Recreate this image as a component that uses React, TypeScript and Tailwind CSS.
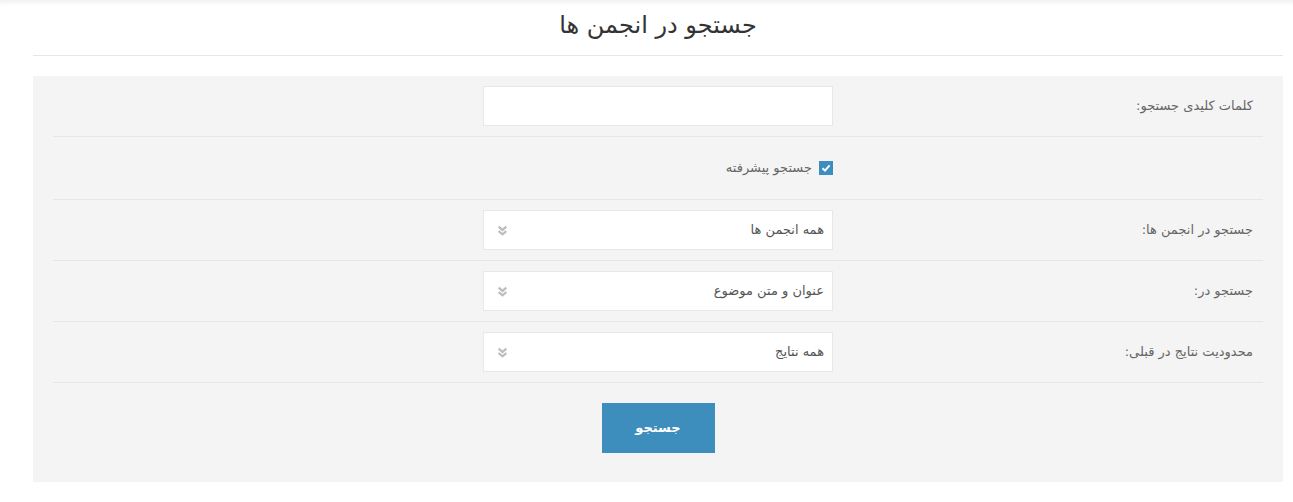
import { useState } from 'react';

const font = { fontFamily: '"DejaVu Sans", Tahoma, sans-serif' };

function Chevrons() {
  return (
    <svg width="11" height="11" viewBox="0 0 10 10" className="text-[#bdbdbd]">
      <path d="M1.5 1.5 L5 4.5 L8.5 1.5" fill="none" stroke="currentColor" strokeWidth="2" />
      <path d="M1.5 5.5 L5 8.5 L8.5 5.5" fill="none" stroke="currentColor" strokeWidth="2" />
    </svg>
  );
}

function Row({ label, children }: { label?: string; children: React.ReactNode }) {
  return (
    <div className="grid grid-cols-[1fr_350px_1fr] items-center border-b border-[#e6e6e6] py-[10px]">
      <div className="pr-[10px] text-[13px] text-[#666]">{label}</div>
      <div>{children}</div>
      <div />
    </div>
  );
}

function Select({ value }: { value: string }) {
  return (
    <div className="flex h-10 items-center justify-between border border-[#e8e8e8] bg-white pl-[13px] pr-[8px] text-[13px] text-[#555]">
      <span>{value}</span>
      <Chevrons />
    </div>
  );
}

export default function App() {
  const [advanced, setAdvanced] = useState(true);

  return (
    <div dir="rtl" style={font} className="min-h-[502px] bg-white shadow-[inset_0_5px_5px_-3px_rgba(0,0,0,0.07)]">
      <div className="px-[10px]">
        <h1 className="ml-[23px] border-b border-[#e6e6e6] pt-[8px] pb-[13px] text-center text-[24px] leading-[34px] text-[#333]">
          جستجو در انجمن ها
        </h1>
        <div className="ml-[23px] mt-5 bg-[#f4f4f4] px-5 pb-[29px]">
          <Row label="کلمات کلیدی جستجو:">
            <input className="block h-10 w-full border border-[#e8e8e8] bg-white px-2 outline-none" />
          </Row>
          <div className="grid grid-cols-[1fr_350px_1fr] items-center border-b border-[#e6e6e6] py-[10px]">
            <div />
            <label className="flex h-[42px] cursor-pointer items-center gap-[7px] text-[13px] text-[#666]">
              <span
                onClick={() => setAdvanced(!advanced)}
                className={`flex h-[14px] w-[14px] items-center justify-center ${advanced ? 'bg-[#3d8dc0]' : 'bg-white border border-[#ccc]'}`}
              >
                {advanced && (
                  <svg width="10" height="10" viewBox="0 0 10 10">
                    <path d="M1.5 5.2 L4 7.6 L8.6 2.4" fill="none" stroke="white" strokeWidth="2" />
                  </svg>
                )}
              </span>
              جستجو پیشرفته
            </label>
            <div />
          </div>
          <Row label="جستجو در انجمن ها:">
            <Select value="همه انجمن ها" />
          </Row>
          <Row label="جستجو در:">
            <Select value="عنوان و متن موضوع" />
          </Row>
          <Row label="محدودیت نتایج در قبلی:">
            <Select value="همه نتایج" />
          </Row>
          <div className="flex justify-center pt-5">
            <button className="h-[50px] w-[113px] bg-[#3d8ebd] text-[13px] font-bold text-white">جستجو</button>
          </div>
        </div>
      </div>
    </div>
  );
}
